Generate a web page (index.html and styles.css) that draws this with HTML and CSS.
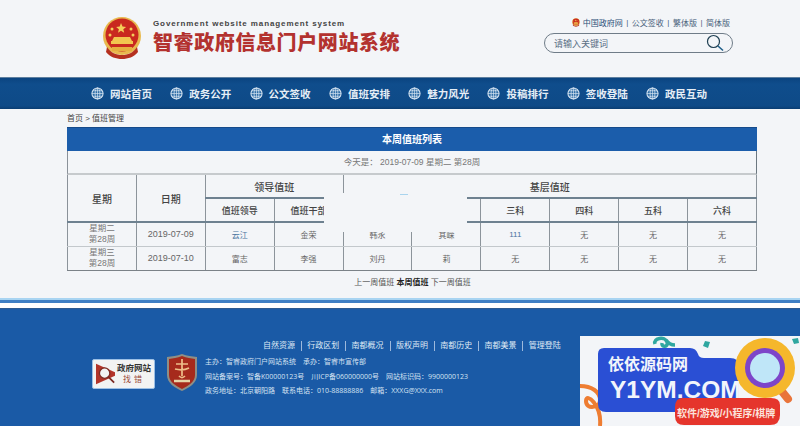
FILE: index.html
```html
<!DOCTYPE html>
<html>
<head lang="zh-CN">
    <meta charset="UTF-8">
    <title>智睿政府信息门户网站系统</title>
    <link rel="stylesheet" href="styles.css">
</head>
<body>
    <svg class="defs" width="0" height="0">
        <symbol id="globe" viewBox="0 0 14 14">
            <circle cx="7" cy="7" r="6" fill="#2f6ea8" stroke="#dce8f3" stroke-width="1.1"/>
            <ellipse cx="7" cy="7" rx="2.6" ry="6" fill="none" stroke="#dce8f3" stroke-width=".8"/>
            <path d="M7 1v12M1 7h12M2 4h10M2 10h10" fill="none" stroke="#dce8f3" stroke-width=".7"/>
        </symbol>
        <symbol id="emblem" viewBox="0 0 40 42">
            <ellipse cx="20" cy="19" rx="19" ry="19" fill="#e8b94e"/>
            <circle cx="20" cy="18" r="16.500" fill="#c9291f"/>
            <path d="M19 6l1.500 3.600 3.600.3-2.800 2.300.9 3.500-3.200-1.900-3 1.900.9-3.500-2.800-2.300 3.600-.3z" fill="#f4cf5a"/>
            <circle cx="10" cy="12" r="1.500" fill="#f4cf5a"/>
            <circle cx="29" cy="12" r="1.500" fill="#f4cf5a"/>
            <circle cx="8" cy="18" r="1.500" fill="#f4cf5a"/>
            <circle cx="31" cy="18" r="1.500" fill="#f4cf5a"/>
            <path d="M9 24h22v3H9zM12 20h16l2 4H10z" fill="#f2c64f"/>
            <path d="M5 30c4 6 9 8 15 8s11-2 15-8l1 5c-4 5-10 7-16 7S8 40 4 35z" fill="#b5301f"/>
            <path d="M10 30h20v4H10z" fill="#e6ae3f"/>
        </symbol>
    </svg>

    <header class="top">
        <div class="brand">
            <svg class="brand-logo"><use href="#emblem"/></svg>
            <div>
                <p class="brand-en">Government website management system</p>
                <h1 class="brand-cn">智睿政府信息门户网站系统</h1>
            </div>
        </div>
        <div class="tools">
            <div class="tools-links">
                <svg class="tools-logo"><use href="#emblem"/></svg>
                <a class="strong">中国政府网</a><i>|</i><a>公文签收</a><i>|</i><a>繁体版</a><i>|</i><a>简体版</a>
            </div>
            <div class="search">
                <span>请输入关键词</span>
                <svg width="18" height="18" viewBox="0 0 18 18">
                    <circle cx="7.500" cy="7.500" r="6" fill="none" stroke="#1f3f52" stroke-width="1.200"/>
                    <path d="M12 12l5 4.500" stroke="#1f5f8a" stroke-width="1.600"/>
                </svg>
            </div>
        </div>
    </header>

    <nav class="nav">
        <a><svg><use href="#globe"/></svg>网站首页</a>
        <a><svg><use href="#globe"/></svg>政务公开</a>
        <a><svg><use href="#globe"/></svg>公文签收</a>
        <a><svg><use href="#globe"/></svg>值班安排</a>
        <a><svg><use href="#globe"/></svg>魅力风光</a>
        <a><svg><use href="#globe"/></svg>投稿排行</a>
        <a><svg><use href="#globe"/></svg>签收登陆</a>
        <a><svg><use href="#globe"/></svg>政民互动</a>
    </nav>

    <main class="main">
        <div class="crumb">首页 &gt; 值班管理</div>
        <div class="panel">
            <div class="panel-title">本周值班列表</div>
            <div class="panel-today">今天是： 2019-07-09 星期二 第28周</div>
            <table class="duty">
                <tr class="row-head">
                    <th rowspan="2">星期</th>
                    <th rowspan="2">日期</th>
                    <th colspan="2" class="group">领导值班</th>
                    <th colspan="6" class="group">基层值班</th>
                </tr>
                <tr class="row-head row-sub">
                    <th>值班领导</th>
                    <th>值班干部</th>
                    <th>一科</th>
                    <th>二科</th>
                    <th>三科</th>
                    <th>四科</th>
                    <th>五科</th>
                    <th>六科</th>
                </tr>
                <tr>
                    <td class="week">星期二<br>第28周</td>
                    <td class="date">2019-07-09</td>
                    <td class="link">云江</td><td>金荣</td><td>韩永</td><td>其嵘</td><td class="link">111</td><td>无</td><td>无</td><td>无</td>
                </tr>
                <tr class="row-last">
                    <td class="week">星期三<br>第28周</td>
                    <td class="date">2019-07-10</td>
                    <td>富志</td><td>李强</td><td>刘丹</td><td>莉</td><td>无</td><td>无</td><td>无</td><td>无</td>
                </tr>
            </table>
            <!-- blank patch over the middle of the table header -->
            <div class="patch"><span></span></div>
        </div>
        <div class="pager"><a>上一周值班</a> <a class="on">本周值班</a> <a>下一周值班</a></div>
    </main>

    <div class="rule"></div>

    <footer class="foot">
        <div class="foot-links">
            <a>自然资源</a><a>行政区划</a><a>南都概况</a><a>版权声明</a><a>南都历史</a><a>南都美景</a><a>管理登陆</a>
        </div>
        <div class="foot-body">
            <div class="badge">
                <svg width="22" height="24" viewBox="0 0 22 24">
                    <path d="M0 0l22 10v4L0 24z" fill="#b2342a"/>
                    <circle cx="10" cy="11" r="6" fill="#f2f3f3" stroke="#7c2a22" stroke-width="1.500"/>
                    <path d="M14 15l7 7" stroke="#7c2a22" stroke-width="2"/>
                </svg>
                <div class="badge-text">
                    <b>政府网站</b>
                    <em>找错</em>
                </div>
            </div>
            <svg class="shield" width="30" height="37" viewBox="0 0 30 37">
                <path d="M15 0c5 2 10 2 15 3v18c0 8-8 13-15 16C8 34 0 29 0 21V3c5-1 10-1 15-3z" fill="#8f8f86"/>
                <path d="M15 2c5 2 9 2 13 3v16c0 7-7 11-13 14C9 32 2 28 2 21V5c4-1 8-1 13-3z" fill="#a62a1c"/>
                <path d="M9 10h12M8 15c4 1 10 1 14-1M15 5v17M12 22c2 2 4 2 6 0" stroke="#eec08a" stroke-width="1.700" fill="none"/>
                <path d="M7 27h16" stroke="#e8d5a8" stroke-width="2.500"/>
            </svg>
            <div class="foot-info">
                <p><span>主办：智睿政府门户网站系统</span><span>承办：智睿市宣传部</span></p>
                <p><span>网站备案号：智备K00000123号</span><span>川ICP备060000000号</span><span>网站标识码：9900000123</span></p>
                <p><span>政务地址：北京朝阳路</span><span>联系电话：010-88888886</span><span>邮箱：XXXG@XXX.com</span></p>
            </div>
        </div>
    </footer>

    <!-- promo card sitting over the footer corner -->
    <aside class="promo">
        <svg width="220" height="90" viewBox="0 0 220 90">
            <path d="M75 8c-2-6 10-8 12-2 2 5-6 6-5 1M86 4c2 3 5 5 9 5" fill="none" stroke="#2fa7a0" stroke-width="3.500"/>
            <path d="M125 5l5 1-2 6-5-2z" fill="#2fa7a0"/>
            <path d="M212 3l6-1 1 5-5 1z" fill="#2fa7a0"/>
            <path d="M0 50c12 0 20 6 20 14s-14 10-14 1 16 4 14 25" fill="none" stroke="#ee7d32" stroke-width="4"/>
            <path d="M18 18q0-6 6-6h86q6 0 8 6 1 4 6 4h26q9 0 9 8v38q0 8-9 8H26q-8 0-8-8z" fill="#2a4fd4"/>
            <path d="M103 62h88q9 0 9 7v10q0 10-10 10h-86q-9 0-9-9v-9q0-9 8-9z" fill="#e5352c"/>
            <path d="M196 48l12 15" stroke="#e9743a" stroke-width="8" stroke-linecap="round"/>
            <circle cx="185" cy="32" r="30" fill="#f5b72c"/>
            <circle cx="185" cy="32" r="20" fill="#7d45c9"/>
            <circle cx="185" cy="32" r="15" fill="#bfe6f8"/>
            <text class="promo-cn" x="28" y="34">依依源码网</text>
            <text class="promo-en" x="30" y="62">Y1YM.COM</text>
            <text class="promo-tag" x="97" y="81">软件/游戏/小程序/棋牌</text>
        </svg>
    </aside>
</body>
</html>
```

FILE: styles.css
```css
* {
    margin: 0;
    padding: 0;
    box-sizing: border-box;
}
html,body {
    height: 426px;
    overflow: hidden;
}
body {
    position: relative;
    display: flex;
    flex-direction: column;
    background: #f3f5f8;
    font-family: "Liberation Sans", "Noto Sans CJK SC", sans-serif;
    color: #555;
}
.defs {
    position: absolute;
}

/* header */
.top {
    height: 77px;
    display: flex;
    justify-content: space-between;
    padding: 17px 67px 0 102px;
}
.brand {
    display: flex;
    gap: 11px;
}
.brand-logo {
    width: 40px;
    height: 42px;
}
.brand-en {
    margin-top: 2px;
    font-size: 8px;
    line-height: 10px;
    font-weight: bold;
    letter-spacing: .89px;
    color: #444;
}
.brand-cn {
    margin-top: 1px;
    font-size: 20px;
    line-height: 26px;
    font-weight: 900;
    letter-spacing: .6px;
    color: #b3322f;
    white-space: nowrap;
}
.tools {
    width: 190px;
    display: flex;
    flex-direction: column;
    align-items: flex-end;
}
.tools-links {
    display: flex;
    align-items: center;
    height: 11px;
    font-size: 8px;
    margin-right: 3px;
    color: #47607a;
}
.tools-links i {
    font-style: normal;
    margin: 0 3.500px;
}
.tools-links .strong {
    color: #2b4f78;
}
.tools-logo {
    width: 8px;
    height: 9px;
    margin-right: 3px;
}
.search {
    width: 189px;
    height: 20px;
    margin-top: 5px;
    display: flex;
    align-items: center;
    justify-content: space-between;
    padding: 0 8px 0 9px;
    border: 1px solid #6f7c88;
    border-radius: 10px;
    font-size: 9px;
    color: #5a6f85;
}

/* nav */
.nav {
    height: 32px;
    display: flex;
    align-items: center;
    gap: 18.300px;
    padding-left: 91px;
    background: linear-gradient(#0b4480, #0f4d8c 20%, #0e4a87 90%, #0a3d72);
    border-top: 1px solid #5d7f9f;
}
.nav a {
    display: flex;
    align-items: center;
    gap: 6px;
    font-size: 10.500px;
    font-weight: bold;
    color: #e6eef6;
    white-space: nowrap;
}
.nav svg {
    width: 13px;
    height: 13px;
}

/* duty table */
.main {
    height: 189px;
    padding: 0 43px 0 67px;
}
.crumb {
    height: 18px;
    line-height: 20px;
    font-size: 8px;
    color: #444;
}
.panel {
    position: relative;
    width: 690px;
}
.panel-title {
    height: 24px;
    line-height: 24px;
    text-align: center;
    font-size: 10px;
    font-weight: bold;
    color: #fff;
    background: #1b5dab;
    border-top: 1px solid #154a8a;
}
.panel-today {
    height: 24px;
    line-height: 22px;
    text-align: center;
    font-size: 8.500px;
    color: #777;
    border-left: 1px solid #8a9199;
    border-right: 1px solid #6b7780;
    border-bottom: 2px solid #c6cacd;
}
.duty {
    width: 690px;
    table-layout: fixed;
    border-collapse: collapse;
}
.duty th,
.duty td {
    border: 1px solid #8c949b;
    text-align: center;
    font-weight: normal;
}
.duty tr:first-child th {
    border-top: none;
}
.duty th {
    font-size: 10px;
    font-weight: 500;
    color: #444;
    height: 24px;
}
.row-head .group {
    height: 23px;
    border-bottom: 2px solid #6e8190;
}
.row-sub th {
    font-size: 9px;
    border-bottom: 2px solid #6e8190;
}
.duty th[rowspan] {
    border-bottom: 2px solid #6e8190;
    border-left-color: #8a9199;
}
.duty td {
    height: 24px;
    font-size: 8px;
    color: #666;
    border-bottom-color: #c3c8cc;
}
.row-last td {
    border-bottom-color: #7b8288;
}
.duty .link {
    color: #4a74a0;
}
.duty .week {
    font-size: 8.500px;
    line-height: 11px;
    color: #777;
}
.duty .date {
    font-size: 9px;
    color: #666;
}
.patch {
    position: absolute;
    left: 257px;
    top: 66px;
    width: 143px;
    height: 39px;
    background: #f3f5f8;
}
.patch span {
    position: absolute;
    left: 76px;
    top: 1px;
    width: 8px;
    height: 1px;
    background: #a9d4ee;
}
.pager {
    margin-top: 6px;
    text-align: center;
    font-size: 8px;
    line-height: 11px;
    color: #555;
    padding-left: 1px;
}
.pager .on {
    font-weight: bold;
    color: #222;
}

.rule {
    height: 10px;
    border-top: 2px solid #a8d4f2;
    background: linear-gradient(#3f7fc4 0 3px, #fff 3px);
}

/* footer */
.foot {
    flex: 1;
    background: #1a5aa6;
    border-top: 1px solid #2d5a90;
    color: #d5e2f2;
}
.foot-links {
    display: flex;
    padding: 32px 0 0 263px;
    font-size: 8px;
    line-height: 10px;
    color: #dfe9f5;
}
.foot-links a {
    padding-right: 6px;
    margin-right: 5.300px;
    border-right: 1px solid #9db9dc;
}
.foot-links a:last-child {
    border-right: none;
}
.foot-body {
    display: flex;
    align-items: flex-start;
    padding: 3px 0 0 92px;
}
.badge {
    width: 63px;
    height: 30px;
    margin-top: 5px;
    display: flex;
    align-items: center;
    gap: 2px;
    padding-left: 3px;
    background: #f2f3f3;
    border: 1px solid #9cc0e6;
    border-radius: 2px;
}
.badge svg {
    width: 19px;
    height: 22px;
    flex: none;
}
.badge-text {
    text-align: center;
    font-size: 8.500px;
    line-height: 11px;
    color: #333;
    white-space: nowrap;
}
.badge-text b {
    display: block;
    font-family: "Liberation Serif", "Noto Sans CJK SC", serif;
}
.badge-text em {
    font-style: normal;
    font-size: 8px;
    color: #9a4a3a;
    letter-spacing: 3px;
}
.shield {
    margin-left: 12px;
    flex: none;
}
.foot-info {
    margin-left: 8px;
    padding-top: 1px;
    font-family: "Open Sans", "Noto Sans CJK SC", sans-serif;
    font-size: 7px;
    line-height: 14.500px;
    white-space: nowrap;
}
.foot-info span {
    margin-right: 7px;
}

.promo {
    position: absolute;
    right: 0;
    bottom: 0;
    width: 220px;
    height: 90px;
    background: #f3f5f8;
}
.promo svg {
    display: block;
}
.promo-cn {
    font-size: 16px;
    font-weight: bold;
    fill: #f2f5fb;
}
.promo-en {
    font-size: 24.500px;
    font-weight: bold;
    fill: #f2f5fb;
}
.promo-tag {
    font-size: 10px;
    font-weight: bold;
    fill: #fbe3dc;
}
```
